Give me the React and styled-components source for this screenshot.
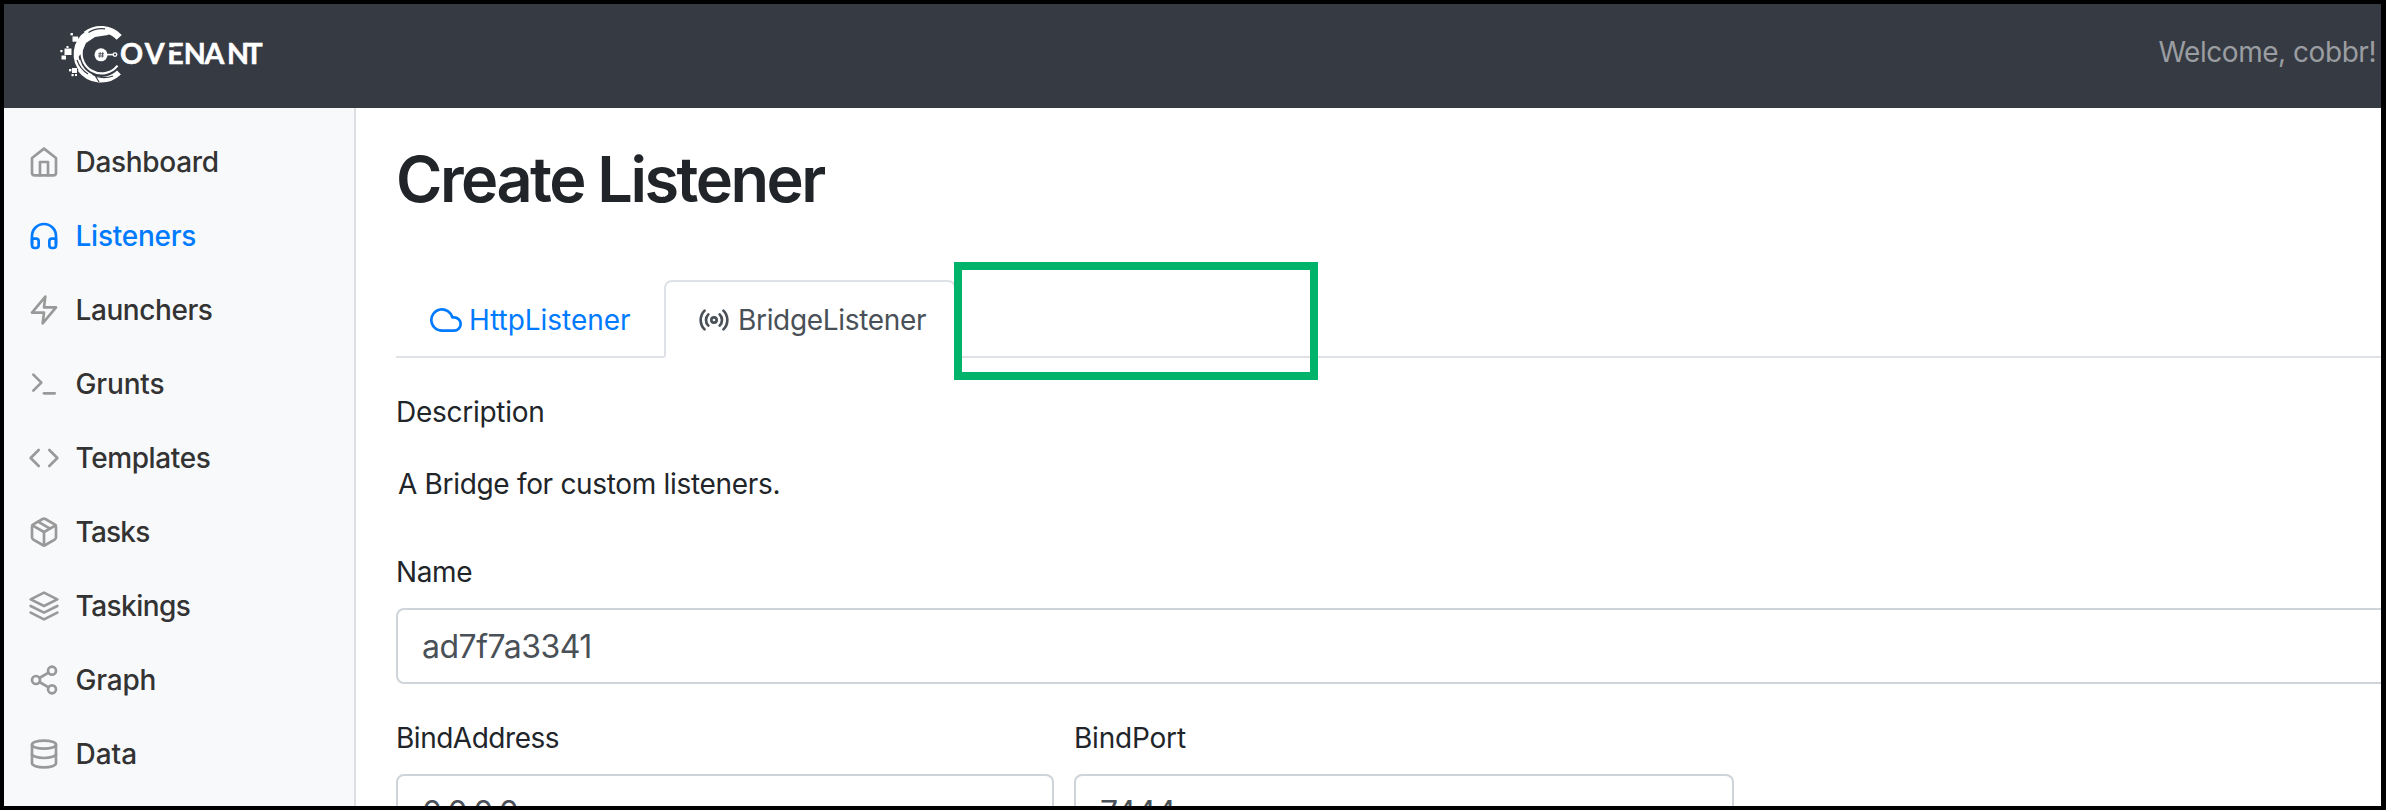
import React from 'react';
import styled, { createGlobalStyle } from 'styled-components';
import {
  FiHome, FiHeadphones, FiZap, FiTerminal, FiCode, FiPackage,
  FiLayers, FiShare2, FiDatabase, FiCloud, FiRadio,
} from 'react-icons/fi';

const GlobalStyle = createGlobalStyle`
  *, *::before, *::after { box-sizing: border-box; }
  body {
    margin: 0;
    font-family: Inter, "Liberation Sans", sans-serif;
    font-size: 28px;
    line-height: 42px;
    color: #212529;
    background: #fff;
  }
`;

const Frame = styled.div`
  display: flex;
  flex-direction: column;
  width: 2386px;
  height: 810px;
  border: 4px solid #000;
  border-right-width: 5px;
  overflow: hidden;
  background: #fff;
`;

const Header = styled.header`
  flex: none;
  display: flex;
  justify-content: space-between;
  align-items: center;
  height: 104px;
  padding: 0 5px 8px 52px;
  background: #363a42;
`;

const LogoSvg = styled.svg`
  display: block;
  width: 212px;
  height: 64px;
  margin-top: 4px;
`;

const Tracked = styled.span`
  letter-spacing: ${(p) => p.$track || 0}px;
  white-space: nowrap;
`;

const Welcome = styled(Tracked)`
  color: #9a9da1;
`;

const Body = styled.div`
  flex: 1;
  display: flex;
  min-height: 0;
`;

const Sidebar = styled.nav`
  flex: none;
  width: 352px;
  padding-top: 17px;
  background: #f8f9fb;
  border-right: 2px solid #dedfe2;
  overflow: hidden;
`;

const NavItem = styled.a`
  display: flex;
  align-items: center;
  gap: 15.5px;
  height: 74px;
  padding-left: 24px;
  font-weight: 550;
  color: ${(p) => (p.$active ? '#007bff' : '#333')};

  svg {
    flex: none;
    width: 32px;
    height: 32px;
    color: ${(p) => (p.$active ? '#007bff' : '#999')};
  }
`;

const Main = styled.main`
  flex: 1;
  min-width: 0;
  padding: 33px 0 0 40px;
  overflow: hidden;
`;

const Title = styled.h1`
  margin: 0 0 63px;
  font-size: 63px;
  line-height: 76px;
  font-weight: 560;
  letter-spacing: -2.5px;
`;

const Tabs = styled.div`
  position: relative;
  display: flex;
  height: 78px;
  border-bottom: 2px solid #dee2e6;
`;

const Tab = styled.a`
  display: flex;
  align-items: center;
  gap: ${(p) => p.$gap}px;
  width: ${(p) => p.$width}px;
  height: 78px;
  padding: 2px 0 0 32px;
  border: 2px solid ${(p) => (p.$active ? '#dee2e6' : 'transparent')};
  border-bottom-color: ${(p) => (p.$active ? '#fff' : 'transparent')};
  border-radius: 8px 8px 0 0;
  background: ${(p) => (p.$active ? '#fff' : 'transparent')};
  color: ${(p) => (p.$active ? '#495057' : '#007bff')};

  svg {
    flex: none;
    width: 32px;
    height: 32px;
  }
`;

const Highlight = styled.div`
  position: absolute;
  left: 558px;
  top: -18px;
  width: 364px;
  height: 118px;
  border: 8px solid #00b36b;
`;

const Field = styled.div`
  display: flex;
  flex-direction: column;
  gap: 15px;
  width: ${(p) => p.$width}px;
`;

const DescriptionBlock = styled.section`
  display: flex;
  flex-direction: column;
  gap: 30px;
  margin: 33px 0 46px;
`;

const DescriptionText = styled(Tracked)`
  padding-left: 2px;
`;

const Input = styled.input`
  width: 100%;
  height: 76px;
  padding: 0 24px;
  border: 2px solid #ced4da;
  border-radius: 8px;
  outline: none;
  background: #fff;
  color: #495057;
  font: 400 32px Inter, "Liberation Sans", sans-serif;
  letter-spacing: ${(p) => p.$track}px;
`;

const FieldRow = styled.div`
  display: flex;
  gap: 20px;
  margin-top: 33px;
`;

const NAV = [
  ['Dashboard', FiHome, -0.3],
  ['Listeners', FiHeadphones, -0.25],
  ['Launchers', FiZap, -0.42],
  ['Grunts', FiTerminal, -0.15],
  ['Templates', FiCode, -0.4],
  ['Tasks', FiPackage, -0.8],
  ['Taskings', FiLayers, -0.55],
  ['Graph', FiShare2, -0.2],
  ['Data', FiDatabase, 0],
];

function Logo() {
  return (
    <LogoSvg viewBox="56 22 212 64" role="img" aria-label="Covenant">
      <g fill="none" stroke="#fff">
        <path d="M119.2 37.4A25 25 0 0 0 86 34.5" strokeWidth="7" />
        <path d="M88 33A25 25 0 0 0 83.5 72" strokeWidth="5" />
        <path d="M117.5 65.6A20 20 0 0 1 83.5 45" strokeWidth="2.2" />
        <path d="M119 72.5A26 26 0 0 1 80 69" strokeWidth="5.6" />
        <path d="M79 60A23 23 0 0 0 92 75.5" strokeWidth="2.4" />
      </g>
      <path d="M79 42L90 31 112 30 108 35 95 37 86 43 81 54 77 58Z" fill="#fff" />
      <g fill="none" stroke="#363a42">
        <path d="M88.5 32.6Q95 27.8 105 28.8" strokeWidth="1.2" />
        <path d="M77 60Q80 69 88 74" strokeWidth="1.1" />
        <path d="M94.5 74.5L99 82M96 76.5Q105 79 113 76" strokeWidth="1.1" />
      </g>
      <g fill="#fff">
        <rect x="64.5" y="48.5" width="7" height="6.5" />
        <rect x="61.5" y="55.5" width="4.5" height="4" />
        <rect x="60.3" y="50" width="2.2" height="2.2" />
        <rect x="72.5" y="36.5" width="5.6" height="5.2" />
        <rect x="70.5" y="33" width="2.4" height="2.4" />
        <rect x="66.5" y="46" width="2" height="2" />
        <rect x="72" y="68" width="5" height="5" />
        <rect x="69" y="69" width="2.4" height="2.4" />
        <rect x="71.5" y="74" width="2.2" height="2.2" />
        <rect x="75" y="74" width="2" height="2" />
        <circle cx="101" cy="54.8" r="6.5" />
      </g>
      <path d="M100.2 52l-.6 5.6M102.8 52l-.6 5.6M98.2 53.8h5.8M98 56h5.8" stroke="#363a42" strokeWidth=".8" fill="none" />
      <path d="M107 54.6h6" stroke="#fff" strokeWidth="1.6" />
      <circle cx="115" cy="54.6" r="1.8" fill="none" stroke="#fff" strokeWidth="1.3" />
      <text
        x="120 144.8 167.3 183.7 204.5 227 245.5"
        y="63.6"
        fill="#fff"
        stroke="#fff"
        strokeWidth=".5"
        fontFamily="Lato, sans-serif"
        fontWeight="700"
        fontSize="28.6"
      >
        OVENANT
      </text>
      <path d="M167 48.7h7" stroke="#363a42" strokeWidth="3" />
    </LogoSvg>
  );
}

export default function App() {
  return (
    <>
      <GlobalStyle />
      <Frame>
        <Header>
          <Logo />
          <Welcome $track={-0.46}>Welcome, cobbr!</Welcome>
        </Header>
        <Body>
          <Sidebar>
            {NAV.map(([label, Icon, track]) => (
              <NavItem key={label} $active={label === 'Listeners'}>
                <Icon />
                <Tracked $track={track}>{label}</Tracked>
              </NavItem>
            ))}
          </Sidebar>
          <Main>
            <Title>Create Listener</Title>
            <Tabs>
              <Tab $width={268} $gap={7}>
                <FiCloud />
                <Tracked $track={-0.05}>HttpListener</Tracked>
              </Tab>
              <Tab $active $width={292} $gap={8}>
                <FiRadio />
                <Tracked $track={-0.32}>BridgeListener</Tracked>
              </Tab>
              <Highlight />
            </Tabs>
            <DescriptionBlock>
              <Tracked $track={-0.28}>Description</Tracked>
              <DescriptionText $track={-0.32}>A Bridge for custom listeners.</DescriptionText>
            </DescriptionBlock>
            <Field $width={2010}>
              <Tracked $track={-0.38}>Name</Tracked>
              <Input readOnly value="ad7f7a3341" $track={-0.5} />
            </Field>
            <FieldRow>
              <Field $width={658}>
                <Tracked $track={-0.48}>BindAddress</Tracked>
                <Input readOnly value="0.0.0.0" $track={-1.1} />
              </Field>
              <Field $width={660}>
                <Tracked $track={-0.2}>BindPort</Tracked>
                <Input readOnly value="7444" $track={-0.6} />
              </Field>
            </FieldRow>
          </Main>
        </Body>
      </Frame>
    </>
  );
}
